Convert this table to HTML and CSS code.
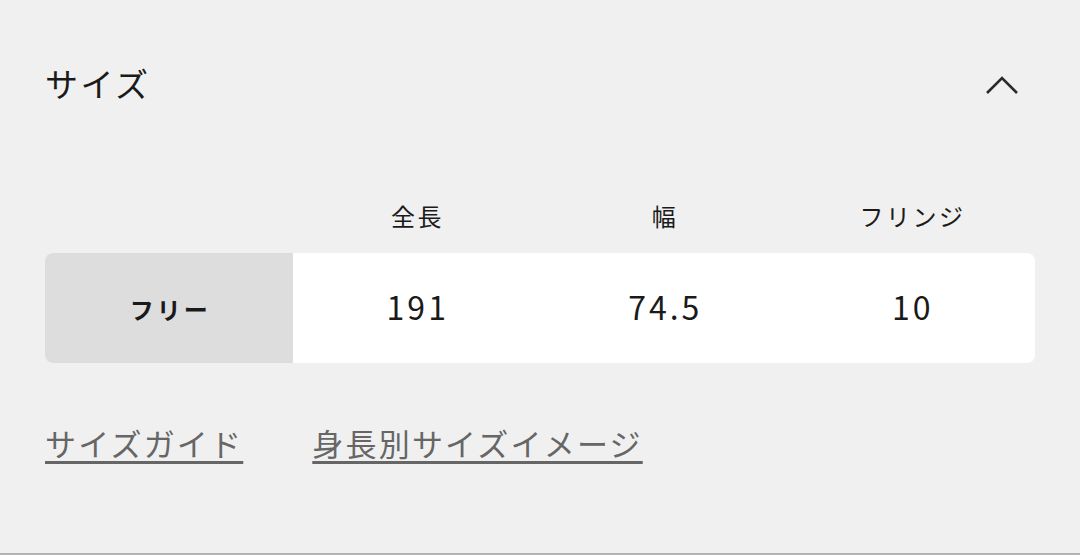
FILE: index.html
```html
<!DOCTYPE html>
<html lang="ja">
<head>
<meta charset="utf-8">
<link rel="stylesheet" href="styles.css">
</head>
<body>
<section class="panel">
  <header class="panel-head">
    <h2 class="title">サイズ</h2>
    <svg class="chevron" width="34" height="20" viewBox="0 0 34 20"><path d="M2 18 L17 3 L32 18" fill="none" stroke="#2a2a2a" stroke-width="2.6"/></svg>
  </header>
  <div class="table">
    <div class="row head">
      <div class="cell"></div>
      <div class="cell">全長</div>
      <div class="cell">幅</div>
      <div class="cell">フリンジ</div>
    </div>
    <div class="row body">
      <div class="cell label">フリー</div>
      <div class="cell">191</div>
      <div class="cell">74.5</div>
      <div class="cell">10</div>
    </div>
  </div>
  <nav class="links">
    <a href="#">サイズガイド</a>
    <a href="#">身長別サイズイメージ</a>
  </nav>
</section>
</body>
</html>
```
FILE: styles.css
```css
html, body {
  margin: 0;
  padding: 0;
  background: #f0f0f0;
}
body {
  width: 1080px;
  height: 555px;
  overflow: hidden;
  font-family: "Noto Sans CJK JP", "Noto Sans", sans-serif;
  color: #1a1a1a;
}
.panel {
  box-sizing: border-box;
  height: 555px;
  padding: 0 45px;
  border-bottom: 2px solid #b3b3b3;
}
.panel-head {
  display: flex;
  justify-content: space-between;
  align-items: center;
  padding-top: 58px;
  height: 50px;
}
.title {
  margin: 0;
  font-size: 33px;
  font-weight: 400;
  line-height: 50px;
  letter-spacing: 2.5px;
}
.chevron {
  margin-right: 16px;
  margin-top: 4px;
}
.table {
  margin-top: 88px;
}
.row {
  display: grid;
  grid-template-columns: repeat(4, 1fr);
}
.row.head .cell {
  font-size: 24px;
  height: 40px;
  line-height: 40px;
  text-align: center;
  letter-spacing: 2.5px;
  text-indent: 2.5px;
}
.row.body {
  margin-top: 17px;
  height: 110px;
  background: #fff;
  border-radius: 8px;
  overflow: hidden;
}
.row.body .cell {
  display: flex;
  align-items: center;
  justify-content: center;
  font-size: 32px;
  letter-spacing: 3px;
  padding-left: 3px;
  padding-bottom: 4px;
  box-sizing: border-box;
}
.row.body .cell.label {
  background: #dddddd;
  font-size: 24px;
  font-weight: 700;
  letter-spacing: 3px;
  padding-bottom: 0;
}
.links {
  display: flex;
  gap: 69px;
  margin-top: 60px;
}
.links a {
  color: #666;
  font-size: 31px;
  line-height: 40px;
  letter-spacing: 2.2px;
  text-decoration: underline;
  text-decoration-thickness: 3px;
  text-underline-offset: 5px;
}
```
